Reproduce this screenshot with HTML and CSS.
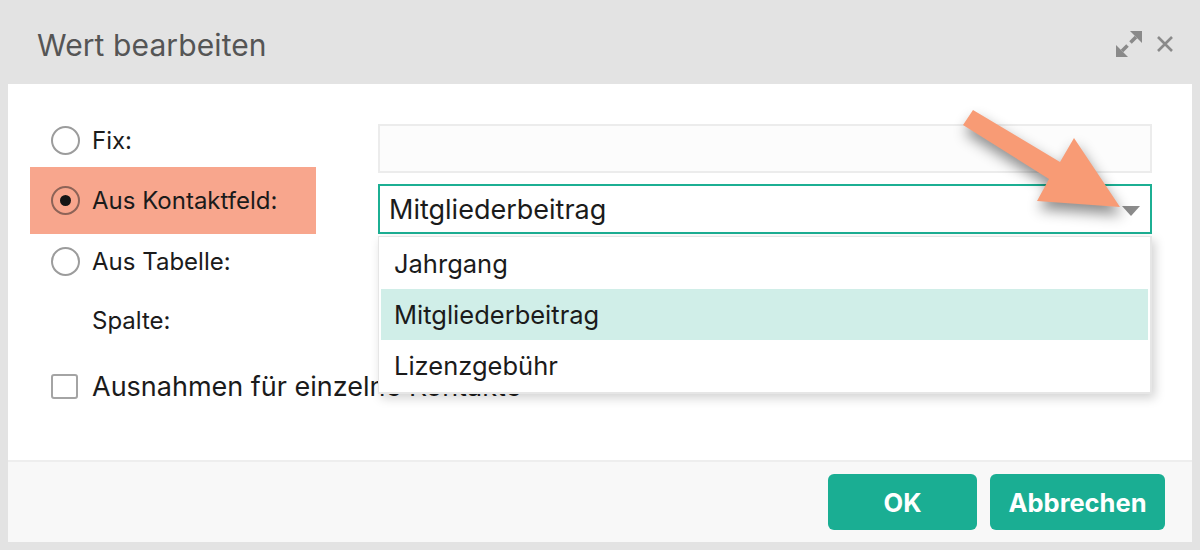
FILE: index.html
```html
<!DOCTYPE html>
<html lang="de">
<head>
<meta charset="utf-8">
<title>Wert bearbeiten</title>
<link rel="stylesheet" href="styles.css">
</head>
<body>
<div class="dialog">
  <header class="head">
    <h1 class="title">Wert bearbeiten</h1>
    <div class="tools">
      <svg class="ico-expand" width="30" height="30" viewBox="0 0 30 30">
        <path d="M16 2 H28 V14 Z" fill="#8a8a8a"/>
        <path d="M2 16 V28 H14 Z" fill="#8a8a8a"/>
        <path d="M22 8 L16.5 13.5 M13.5 16.5 L8 22" stroke="#8a8a8a" stroke-width="3.6" fill="none"/>
      </svg>
      <svg class="ico-close" width="18" height="18" viewBox="0 0 18 18">
        <path d="M2 2 L16 16 M16 2 L2 16" stroke="#8a8a8a" stroke-width="2.6" fill="none"/>
      </svg>
    </div>
  </header>
  <main class="body">
    <div class="choices">
      <label class="opt opt-fix"><span class="radio"></span>Fix:</label>
      <label class="opt opt-kontakt is-marked"><span class="radio is-on"></span>Aus Kontaktfeld:</label>
      <label class="opt opt-tabelle"><span class="radio"></span>Aus Tabelle:</label>
      <div class="opt opt-spalte">Spalte:</div>
      <label class="opt opt-check"><span class="check"></span>Ausnahmen für einzelne Kontakte</label>
    </div>
    <div class="fields">
      <div class="input"></div>
      <div class="select">
        <span class="select-val">Mitgliederbeitrag</span>
        <span class="caret"></span>
        <ul class="list">
          <li class="item">Jahrgang</li>
          <li class="item is-active">Mitgliederbeitrag</li>
          <li class="item">Lizenzgebühr</li>
        </ul>
      </div>
      <svg class="pointer" width="180" height="130" viewBox="0 0 180 130">
        <polygon points="13,5 100,57 114,33 160,102 77,96 89,74 3,20" fill="#f89b75"/>
      </svg>
    </div>
  </main>
  <footer class="foot">
    <button class="btn btn-ok">OK</button>
    <button class="btn btn-cancel">Abbrechen</button>
  </footer>
</div>
</body>
</html>
```
FILE: styles.css
```css
* { box-sizing: border-box; }
html, body { margin: 0; padding: 0; }
body {
  background: #e3e3e3;
  font-family: Inter, "Noto Sans", "Liberation Sans", sans-serif;
  color: #1b1b1b;
  width: 1200px;
  height: 550px;
  overflow: hidden;
}
.dialog {
  display: flex;
  flex-direction: column;
  height: 550px;
}
.head {
  height: 84px;
  display: flex;
  align-items: center;
  justify-content: space-between;
  padding: 6px 26px 0 37px;
}
.title {
  margin: 0;
  font-size: 30px;
  font-weight: 400;
  color: #555;
  letter-spacing: 0.1px;
}
.tools {
  display: flex;
  align-items: center;
  gap: 12px;
  margin-top: -2px;
}
.ico-expand, .ico-close { display: block; }

.body {
  background: #fff;
  margin: 0 8px;
  height: 376px;
  display: flex;
  gap: 62px;
  padding: 30px 40px 0 22px;
}
.choices {
  width: 286px;
  flex: none;
  display: flex;
  flex-direction: column;
}
.opt {
  display: flex;
  align-items: center;
  font-size: 24px;
  padding-left: 21px;
  white-space: nowrap;
}
.opt-fix { height: 53px; }
.opt-kontakt { height: 67px; }
.opt-tabelle { height: 54px; }
.opt-spalte { height: 64px; padding-left: 62px; }
.opt-check { height: 68px; font-size: 27px; }
.is-marked { background: #f8a68d; }
.radio {
  width: 29px;
  height: 29px;
  border-radius: 50%;
  border: 2px solid #9c9c9c;
  margin-right: 12px;
  flex: none;
  display: flex;
  align-items: center;
  justify-content: center;
}
.radio.is-on { border-color: #8d6357; }
.radio.is-on::after {
  content: "";
  width: 11px;
  height: 11px;
  border-radius: 50%;
  background: #151515;
}
.check {
  width: 27px;
  height: 25px;
  border: 2px solid #a4a4a4;
  border-radius: 3px;
  margin-right: 14px;
  flex: none;
}

.fields {
  flex: 1;
  padding-top: 10px;
  position: relative;
}
.input {
  height: 49px;
  border: 2px solid #ececec;
  background: #fcfcfc;
}
.select {
  margin-top: 11px;
  height: 50px;
  border: 2px solid #1caf93;
  display: flex;
  align-items: center;
  padding-left: 9px;
  font-size: 27px;
  position: relative;
}
.select-val { flex: 1; }
.caret {
  width: 0;
  height: 0;
  border-left: 9px solid transparent;
  border-right: 9px solid transparent;
  border-top: 10px solid #8c8c8c;
  margin-right: 10px;
  margin-top: 4px;
}
.list {
  position: absolute;
  top: calc(100% + 4px);
  left: -2px;
  right: -2px;
  margin: 0;
  padding: 1px 2px 1px 2px;
  list-style: none;
  background: #fff;
  border: 1px solid #e6e6e6;
  border-right-width: 2px;
  border-bottom-width: 2px;
  box-shadow: 3px 4px 10px rgba(0,0,0,0.18);
  z-index: 2;
}
.item {
  height: 51px;
  display: flex;
  align-items: center;
  padding-left: 13px;
  font-size: 25.5px;
}
.is-active { background: #d0eee8; }
.pointer {
  position: absolute;
  left: 582px;
  top: -9px;
  z-index: 3;
  filter: drop-shadow(2px 8px 7px rgba(0,0,0,0.45));
}

.foot {
  margin: 0 8px 8px;
  flex: 1;
  background: #f8f8f8;
  border-top: 2px solid #eeeeee;
  display: flex;
  justify-content: flex-end;
  align-items: center;
  gap: 13px;
  padding: 0 27px 0 0;
}
.btn {
  height: 56px;
  border: none;
  border-radius: 6px;
  background: #1aae93;
  color: #fff;
  font-family: inherit;
  font-size: 25.5px;
  font-weight: 700;
  padding: 0;
}
.btn-ok { width: 149px; }
.btn-cancel { width: 175px; }
```
